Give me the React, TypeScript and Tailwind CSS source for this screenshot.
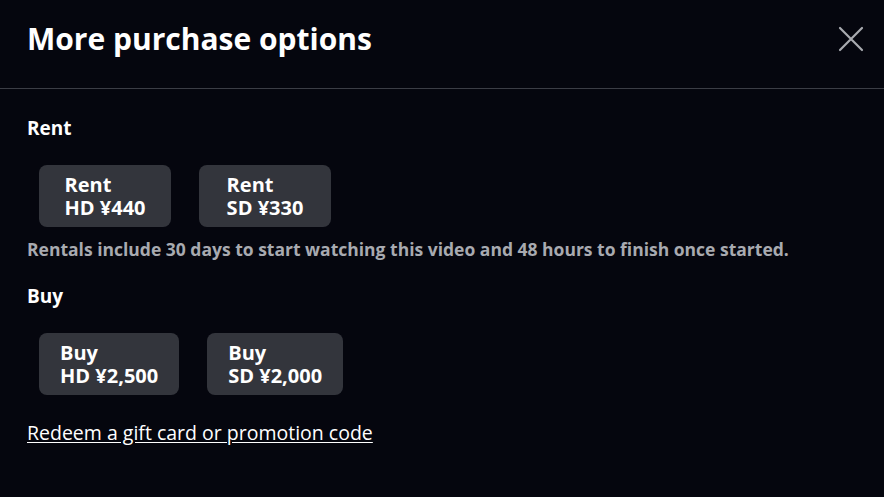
const font = { fontFamily: "'Open Sans', 'DejaVu Sans', sans-serif" };

type Option = { label: string; detail: string };

const rent: Option[] = [
  { label: "Rent", detail: "HD ¥440" },
  { label: "Rent", detail: "SD ¥330" },
];

const buy: Option[] = [
  { label: "Buy", detail: "HD ¥2,500" },
  { label: "Buy", detail: "SD ¥2,000" },
];

function OptionButton({ o }: { o: Option }) {
  return (
    <button className="flex min-w-[132px] justify-center rounded-lg bg-[#33353c] px-[21px] py-[8px] text-[20px] font-bold leading-[23px] text-white">
      <span className="flex flex-col items-start text-left">
        <span>{o.label}</span>
        <span>{o.detail}</span>
      </span>
    </button>
  );
}

export default function App() {
  return (
    <div className="h-[497px] w-[884px] overflow-hidden bg-[#05060e] text-white" style={font}>
      <header className="flex h-[89px] items-start justify-between border-b border-[#3b3d45] pl-[27px] pr-[20px]">
        <h1 className="mt-[24px] text-[30px] font-bold leading-[30px]">More purchase options</h1>
        <button aria-label="Close" className="mt-[26px] text-[#a9abb0]">
          <svg width="26" height="26" viewBox="0 0 26 26" fill="none" stroke="currentColor" strokeWidth="2.2" strokeLinecap="round">
            <path d="M2 2 L24 24 M24 2 L2 24" />
          </svg>
        </button>
      </header>

      <main className="px-[27px] pt-[28px]">
        <h2 className="text-[19px] font-bold leading-[22px]">Rent</h2>
        <div className="mt-[26px] flex gap-[28px] pl-[12px]">
          {rent.map((o) => (
            <OptionButton key={o.detail} o={o} />
          ))}
        </div>
        <p className="mt-[11px] text-[17.5px] font-bold leading-[22px] text-[#a8aab0]">
          Rentals include 30 days to start watching this video and 48 hours to finish once started.
        </p>

        <h2 className="mt-[25px] text-[19px] font-bold leading-[22px]">Buy</h2>
        <div className="mt-[26px] flex gap-[28px] pl-[12px]">
          {buy.map((o) => (
            <OptionButton key={o.detail} o={o} />
          ))}
        </div>

        <a href="#" className="mt-[26px] inline-block text-[19.5px] leading-[24px] underline underline-offset-2">
          Redeem a gift card or promotion code
        </a>
      </main>
    </div>
  );
}
